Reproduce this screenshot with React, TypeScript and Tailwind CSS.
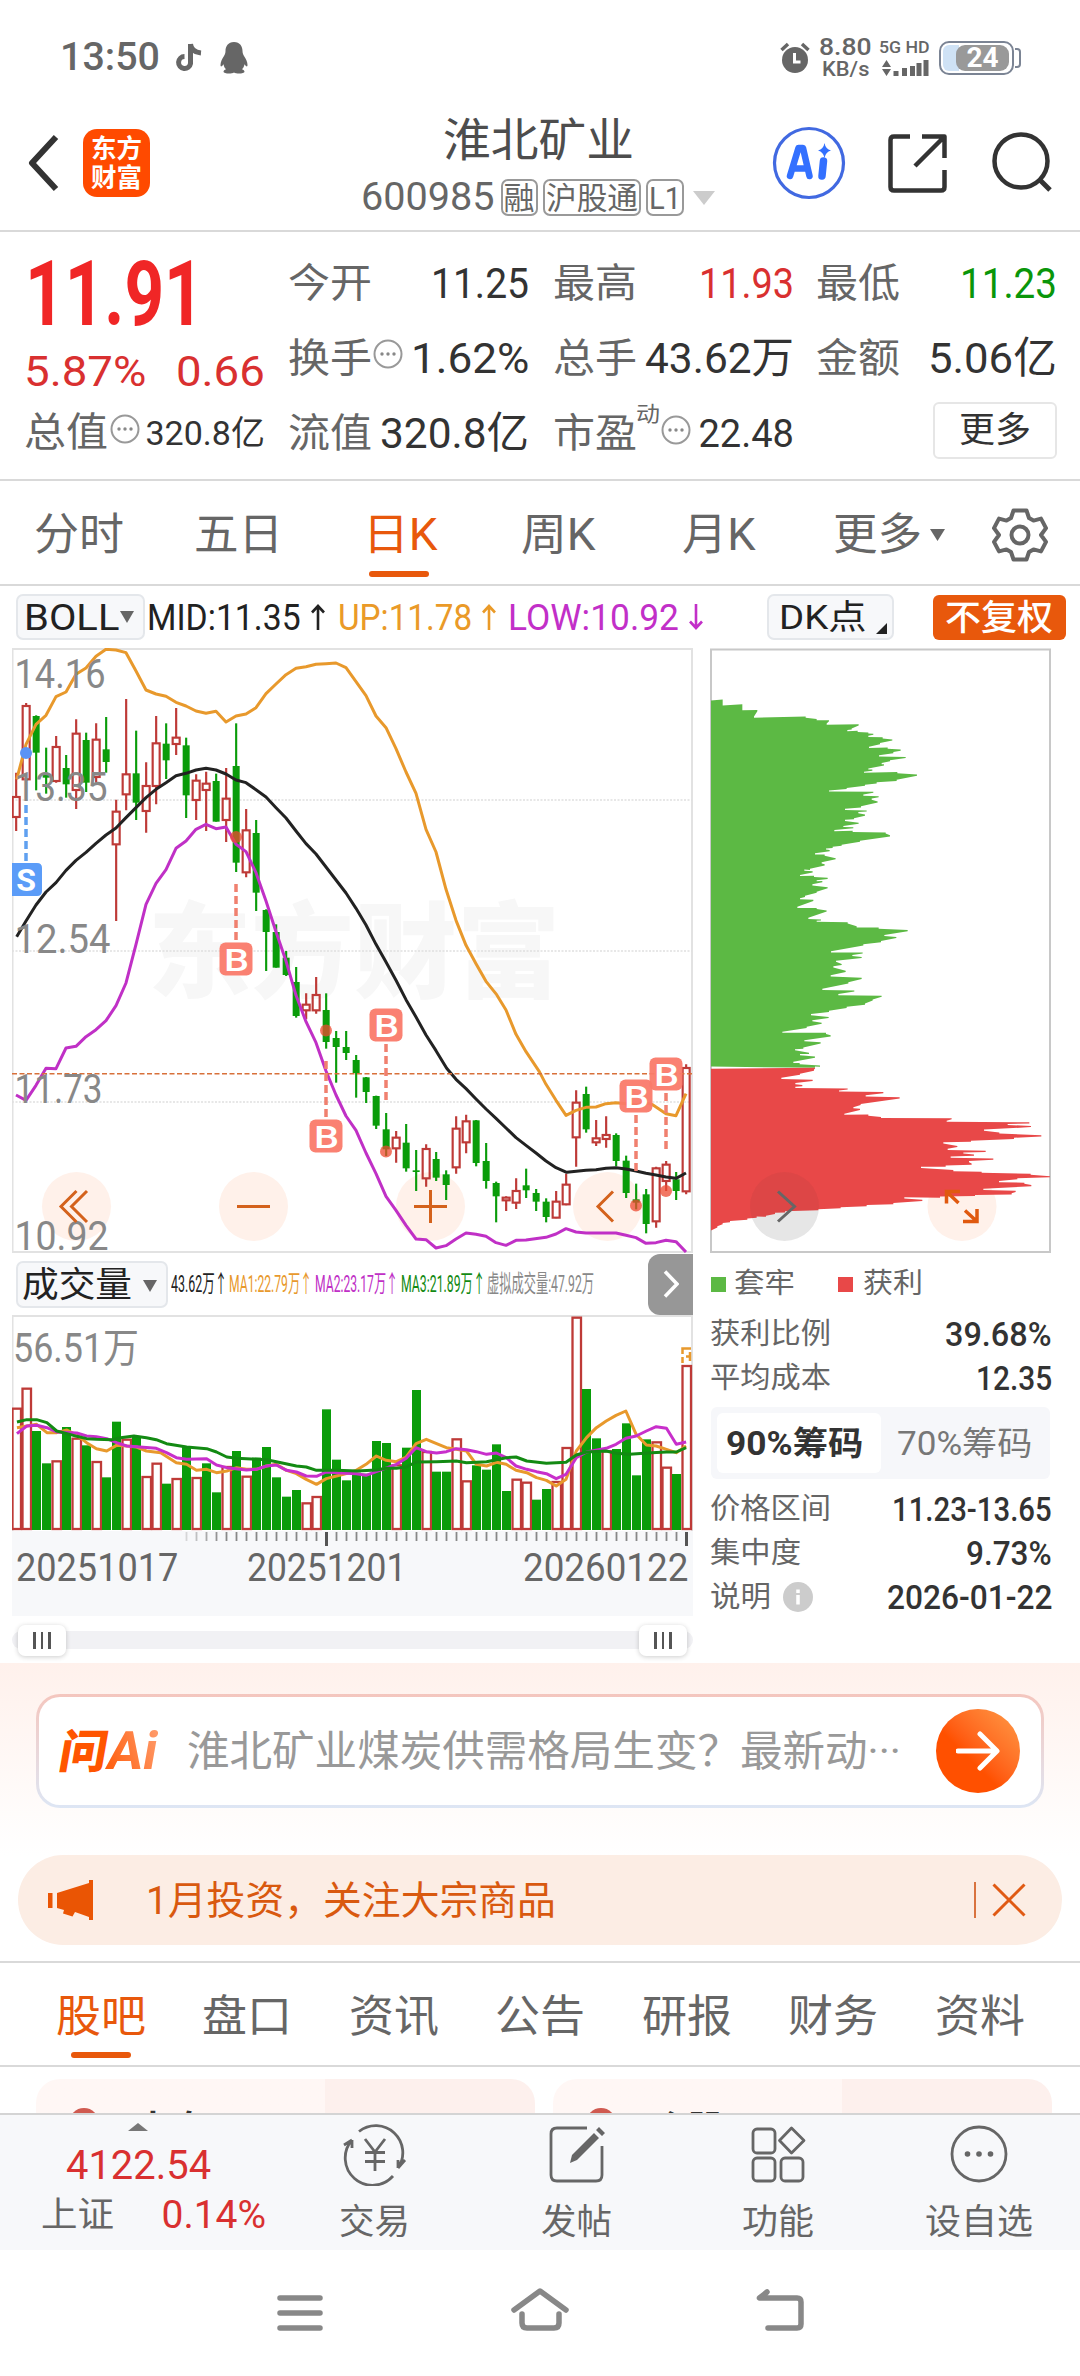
import { useLayoutEffect, useRef, useState, type ReactNode } from "react";

const FONT = "font-['Roboto','Noto_Sans_CJK_SC',sans-serif]";

/** One line of text condensed or widened to an exact pixel width. */
function Fit({ w, className = "", children }: { w: number; className?: string; children: ReactNode }) {
  const ref = useRef<HTMLSpanElement>(null);
  const [scale, setScale] = useState(1);
  useLayoutEffect(() => {
    if (ref.current) setScale((w + 4) / ref.current.offsetWidth);
  }, [w]);
  return (
    <span className={`inline-block shrink-0 whitespace-nowrap leading-none ${className}`} style={{ width: w }}>
      <span ref={ref} className="-ml-[2.5px] inline-block origin-left" style={{ transform: `scaleX(${scale})` }}>
        {children}
      </span>
    </span>
  );
}

function Draw({ box, className, children }: { box: string; className: string; children: ReactNode }) {
  return (
    <svg viewBox={box} className={`shrink-0 ${className}`} fill="none">
      {children}
    </svg>
  );
}

function Dots({ className = "" }: { className?: string }) {
  return (
    <Draw box="0 0 30 30" className={`h-[30px] w-[30px] ${className}`}>
      <circle cx="15" cy="15" r="13.5" stroke="#999" strokeWidth="2" />
      <circle cx="9" cy="15" r="1.7" fill="#888" />
      <circle cx="15" cy="15" r="1.7" fill="#888" />
      <circle cx="21" cy="15" r="1.7" fill="#888" />
    </Draw>
  );
}

function StatusBar() {
  return (
    <div className="flex h-[115px] items-center pl-[62px] text-[#666]">
      <Fit w={96} className="text-[39px] font-medium">13:50</Fit>
      <Draw box="0 0 28 30" className="ml-[17px] h-[30px] w-[28px]">
        <path d="M15.5 1V20.5A6 6 0 1 1 9.5 13.5" stroke="#666" strokeWidth="5" />
        <path d="M15.5 1c.5 6 4.500 8.500 10.500 9" stroke="#666" strokeWidth="5" />
      </Draw>
      <Draw box="0 0 28 32" className="ml-[17px] h-[32px] w-[28px]">
        <path
          d="M14 0C8 0 5.500 4.500 5.500 9c0 2-.5 3-1.500 5C2 17 .5 20 .5 23c0 2 1 2 3-.8.4 2.300 1.200 3.800 2.500 5-1.500.5-2.500 1.300-2.500 2.600 0 2 8 2.400 10.500.8 2.500 1.600 10.500 1.200 10.500-.8 0-1.300-1-2.100-2.500-2.600 1.300-1.200 2.100-2.700 2.500-5 2 2.800 3 2.800 3 .8 0-3-1.500-6-3.500-9-1-2-1.500-3-1.500-5C22.500 4.500 20 0 14 0Z"
          fill="#666"
        />
      </Draw>
      <Draw box="0 0 30 32" className="ml-[532px] h-[32px] w-[30px]">
        <circle cx="15" cy="18" r="13" fill="#666" />
        <path d="M1.500 8 8 2M28.500 8 22 2" stroke="#666" strokeWidth="3.500" />
        <path d="M14.500 11v9h6" stroke="#fff" strokeWidth="3" />
      </Draw>
      <div className="ml-[10px] flex w-[52px] flex-col items-center font-medium">
        <Fit w={49} className="text-[23px]">8.80</Fit>
        <Fit w={43} className="text-[20px]">KB/s</Fit>
      </div>
      <div className="ml-[9px] flex w-[48px] flex-col items-center gap-[3px] font-medium">
        <Fit w={47} className="text-[17px]">5G HD</Fit>
        <Draw box="0 0 48 18" className="h-[18px] w-[48px]">
          <path d="M1 8 5.500 1 10 8ZM1 10l4.500 7L10 10Z" fill="#666" />
          <path d="M15 17v-5M23.500 17V9M31.500 17V7M38 17V4M45 17V1" stroke="#666" strokeWidth="5" />
        </Draw>
      </div>
      <div className="relative ml-[10px] h-[34px] w-[75px] overflow-hidden rounded-[10px] border-[2px] border-[#7b8494] bg-white p-[2px]">
        <div className="h-full w-[16px] rounded-l-[6px] bg-[#cfe2f5]" />
        <div className="absolute top-[2px] left-[15px] flex h-[26px] w-[53px] items-center justify-center rounded-[9px] bg-[#999] text-[28px] leading-none font-bold text-white">
          24
        </div>
      </div>
      <div className="ml-[1px] h-[20px] w-[6px] rounded-r-[4px] border-[2px] border-l-0 border-[#7b8494]" />
    </div>
  );
}

function Tag({ w, children }: { w: number; children: ReactNode }) {
  return (
    <span className="flex h-[37px] items-center rounded-[7px] border-[2px] border-[#999] px-[3px] pt-[2px] text-[31px] text-[#666]">
      <Fit w={w}>{children}</Fit>
    </span>
  );
}

function Header() {
  return (
    <header className="grid h-[117px] grid-cols-[363px_352px_1fr] border-b-[2px] border-[#d9d9d9]">
      <div className="flex items-start pt-[14px] pl-[27px]">
        <Draw box="0 0 34 60" className="mt-[4px] h-[60px] w-[34px]">
          <path d="M29 4 5 30 29 56" stroke="#333" strokeWidth="6" strokeLinejoin="round" />
        </Draw>
        <div className="ml-[22px] flex h-[68px] w-[67px] flex-col items-center justify-center gap-[3px] rounded-[14px] bg-[#ff4a00] text-[26px] font-bold text-white">
          <Fit w={47}>东方</Fit>
          <Fit w={47}>财富</Fit>
        </div>
      </div>
      <div className="flex flex-col items-center">
        <Fit w={187} className="mt-[2px] text-[46px] text-[#4d4d4d]">淮北矿业</Fit>
        <div className="mt-[15px] flex items-center">
          <Fit w={130} className="text-[39px] text-[#666]">600985</Fit>
          <span className="ml-[8px] flex gap-[5px]">
            <Tag w={27}>融</Tag>
            <Tag w={88}>沪股通</Tag>
            <Tag w={28}>L1</Tag>
          </span>
          <Draw box="0 0 22 14" className="ml-[9px] h-[14px] w-[22px]">
            <path d="M0 0H22L11 14Z" fill="#ccc" />
          </Draw>
        </div>
      </div>
      <div className="flex items-start pt-[11px] pl-[57px]">
        <Draw box="0 0 74 74" className="h-[74px] w-[74px]">
          <circle cx="37" cy="37" r="34.500" stroke="#4169e1" strokeWidth="3.200" />
          <path d="M18 50 26.500 22H31L37.500 50M20.500 42.500H35" stroke="#3370ff" strokeWidth="6.500" strokeLinejoin="round" strokeLinecap="round" />
          <path d="M51.500 35 50 50" stroke="#3370ff" strokeWidth="7.500" strokeLinecap="round" />
          <path d="M52.500 17Q53.500 23 59 24.500 53.500 26 52.500 32 51.500 26 46 24.500 51.500 23 52.500 17Z" fill="#3370ff" />
        </Draw>
        <Draw box="0 0 64 64" className="ml-[40px] mt-[5px] h-[64px] w-[64px]">
          <path d="M24 5.500H8Q4.500 5.500 4.500 9V56Q4.500 59.500 8 59.500H55Q58.500 59.500 58.500 56V39" stroke="#333" strokeWidth="4.500" />
          <path d="M36 5.500H58.500V27M57.500 6.500 29 35" stroke="#333" strokeWidth="4.500" strokeLinejoin="round" />
        </Draw>
        <Draw box="0 0 64 64" className="ml-[40px] mt-[4px] h-[64px] w-[64px]">
          <circle cx="31" cy="31" r="26.500" stroke="#333" strokeWidth="4.500" />
          <path d="M49 49 60 60" stroke="#333" strokeWidth="5" />
        </Draw>
      </div>
    </header>
  );
}

function Stat({ label, children }: { label: string; children?: ReactNode }) {
  return (
    <div className="flex h-[75px] w-[237px] items-center">
      <Fit w={80} className="text-[40px] text-[#666]">{label}</Fit>
      {children}
    </div>
  );
}

function Quote() {
  const num = "ml-auto text-[43px] text-[#333]";
  return (
    <section className="flex h-[249px] border-b-[2px] border-[#d9d9d9] pl-[26px]">
      <div className="flex w-[264px] flex-col pt-[6px] text-[#d93030]">
        <div className="flex h-[113px] items-center">
          <Fit w={175} className="ml-[1px] text-[90px] font-bold text-[#f02626]">11.91</Fit>
        </div>
        <div className="flex h-[40px] items-center text-[43px]">
          <Fit w={118}>5.87%</Fit>
          <Fit w={85} className="ml-[34px]">0.66</Fit>
        </div>
        <div className="flex h-[84px] items-center">
          <Fit w={80} className="text-[40px] text-[#666]">总值</Fit>
          <Dots className="mb-[8px] ml-[4px]" />
          <Fit w={115} className="ml-[8px] text-[34px] text-[#333]">320.8亿</Fit>
        </div>
      </div>
      <div className="grid w-[766px] grid-cols-[265px_263px_1fr] content-start pt-[14px]">
        <Stat label="今开"><Fit w={94} className={num}>11.25</Fit></Stat>
        <Stat label="最高"><Fit w={91} className="ml-auto text-[43px] text-[#d93030]">11.93</Fit></Stat>
        <Stat label="最低"><Fit w={93} className="ml-auto text-[43px] text-[#0a960a]">11.23</Fit></Stat>
        <Stat label="换手"><Dots className="mb-[10px] ml-[3px]" /><Fit w={114} className={num}>1.62%</Fit></Stat>
        <Stat label="总手"><Fit w={145} className={num}>43.62万</Fit></Stat>
        <Stat label="金额"><Fit w={125} className={num}>5.06亿</Fit></Stat>
        <Stat label="流值"><Fit w={145} className={num}>320.8亿</Fit></Stat>
        <Stat label="市盈">
          <Fit w={20} className="mb-[38px] ml-[3px] text-[21px] text-[#666]">动</Fit>
          <Dots className="mb-[8px] ml-[3px]" />
          <Fit w={91} className="ml-auto text-[38px] text-[#333]">22.48</Fit>
        </Stat>
        <div className="ml-[115px] mt-[6px] flex h-[57px] w-[124px] items-center justify-center rounded-[6px] border-[2px] border-[#e6e6e6] bg-white">
          <Fit w={68} className="text-[35px] text-[#333]">更多</Fit>
        </div>
      </div>
    </section>
  );
}

function PeriodTabs() {
  return (
    <nav className="flex h-[105px] items-center border-b-[2px] border-[#d9d9d9] pl-[36px] pt-[4px] text-[44px] text-[#666]">
      <Fit w={86}>分时</Fit>
      <Fit w={85} className="ml-[74px]">五日</Fit>
      <span className="relative ml-[84px] flex text-[#e8580c]">
        <Fit w={71}>日K</Fit>
        <span className="absolute top-[58px] left-[4px] h-[6px] w-[60px] rounded-full bg-[#e8580c]" />
      </span>
      <Fit w={71} className="ml-[87px]">周K</Fit>
      <Fit w={70} className="ml-[90px]">月K</Fit>
      <Fit w={85} className="ml-[81px]">更多</Fit>
      <Draw box="0 0 15 12" className="ml-[10px] h-[12px] w-[15px]">
        <path d="M0 0H15L7.500 12Z" fill="#666" />
      </Draw>
      <Draw box="0 0 56 56" className="ml-[47px] h-[56px] w-[56px]">
        <path
          d="M21.500 3.500h13l2.500 7.500 4.500 2.600 7.500-2 5 9.500-5 6.900 5 6.900-5 9.500-7.500-2-4.500 2.600-2.500 7.500h-13L19 45l-4.500-2.600-7.500 2-5-9.500 5-6.900-5-6.900 5-9.500 7.500 2 4.500-2.600Z"
          stroke="#666"
          strokeWidth="4"
          strokeLinejoin="round"
        />
        <circle cx="28" cy="28" r="8.500" stroke="#666" strokeWidth="4" />
      </Draw>
    </nav>
  );
}

function Down({ className = "" }: { className?: string }) {
  return (
    <Draw box="0 0 14 12" className={`h-[12px] w-[14px] ${className}`}>
      <path d="M0 0H14L7 12Z" fill="#666" />
    </Draw>
  );
}

function Arrow({ color, down = false }: { color: string; down?: boolean }) {
  return (
    <Draw box="0 0 16 26" className={`ml-[11px] h-[26px] w-[16px] ${down ? "rotate-180" : ""}`}>
      <path d="M8 26V2M2 8.500 8 2l6 6.500" stroke={color} strokeWidth="2.600" />
    </Draw>
  );
}

function IndicatorRow() {
  return (
    <div className="flex h-[62px] items-center pl-[16px] text-[37px]">
      <div className="flex h-[46px] w-[129px] items-center rounded-[7px] border-[2px] border-[#e4e7eb] bg-[#f7f8fa] pl-[8px] text-[#222]">
        <Fit w={91}>BOLL</Fit>
        <Down className="ml-[3px]" />
      </div>
      <Fit w={150} className="ml-[4px] text-[#222]">MID:11.35</Fit>
      <Arrow color="#222" />
      <Fit w={130} className="ml-[14px] text-[#ea9a28]">UP:11.78</Fit>
      <Arrow color="#ea9a28" />
      <Fit w={167} className="ml-[13px] text-[#c22fc8]">LOW:10.92</Fit>
      <Arrow color="#c22fc8" down />
      <div className="relative ml-[63px] flex h-[46px] w-[127px] items-center rounded-[7px] border-[2px] border-[#e4e7eb] bg-[#f7f8fa] pl-[12px] text-[34px] text-[#222]">
        <Fit w={84}>DK点</Fit>
        <Draw box="0 0 11 11" className="absolute right-[5px] bottom-[4px] h-[11px] w-[11px]">
          <path d="M11 0V11H0Z" fill="#222" />
        </Draw>
      </div>
      <div className="ml-[39px] flex h-[45px] w-[133px] items-center justify-center rounded-[6px] bg-[#e8580c] pt-[2px] text-[35px] font-medium text-white">
        <Fit w={104}>不复权</Fit>
      </div>
    </div>
  );
}

type Bar = [up: 0 | 1, high: number, low: number, top: number, bottom: number];

/* Daily candles, y in thirds of a pixel. */
const CANDLES: Bar[] = [
  [1, 575, 750, 648, 708], [1, 366, 600, 375, 595], [0, 403, 628, 405, 515], [0, 500, 638, 580, 590],
  [1, 465, 605, 498, 600], [0, 522, 650, 561, 610], [1, 415, 684, 458, 627], [0, 455, 633, 477, 605],
  [1, 427, 608, 476, 588], [0, 408, 575, 505, 543], [1, 656, 1020, 692, 790], [1, 354, 688, 580, 640],
  [0, 449, 717, 577, 665], [1, 544, 755, 615, 690], [1, 405, 670, 487, 615], [0, 427, 594, 488, 538],
  [1, 381, 522, 470, 489], [0, 470, 711, 493, 643], [1, 580, 717, 599, 657], [1, 572, 750, 608, 627],
  [0, 578, 722, 600, 722], [1, 561, 783, 653, 717], [0, 427, 873, 555, 845], [1, 684, 889, 748, 874],
  [0, 717, 990, 756, 935], [0, 985, 1170, 987, 1053], [0, 1030, 1160, 1053, 1160], [0, 1110, 1185, 1130, 1182],
  [0, 1158, 1310, 1203, 1305], [1, 1237, 1315, 1271, 1288], [1, 1188, 1298, 1242, 1288], [0, 1237, 1403, 1287, 1383],
  [0, 1350, 1505, 1371, 1398], [0, 1350, 1437, 1398, 1416], [0, 1422, 1550, 1437, 1476], [0, 1488, 1566, 1489, 1533],
  [0, 1544, 1644, 1545, 1634], [0, 1596, 1725, 1645, 1705], [1, 1650, 1745, 1670, 1702], [0, 1629, 1772, 1685, 1762],
  [0, 1707, 1830, 1768, 1773], [1, 1690, 1817, 1704, 1792], [0, 1713, 1800, 1734, 1790], [0, 1768, 1857, 1780, 1812],
  [1, 1606, 1778, 1643, 1759], [1, 1601, 1717, 1621, 1684], [0, 1617, 1756, 1618, 1746], [0, 1686, 1823, 1740, 1800],
  [0, 1802, 1924, 1806, 1846], [1, 1846, 1890, 1850, 1858], [1, 1792, 1884, 1830, 1865], [0, 1763, 1851, 1813, 1828],
  [0, 1824, 1890, 1836, 1862], [0, 1852, 1924, 1862, 1908], [1, 1830, 1912, 1862, 1910], [1, 1778, 1873, 1811, 1870],
  [1, 1528, 1757, 1565, 1669], [0, 1517, 1655, 1539, 1645], [1, 1617, 1695, 1672, 1684], [1, 1606, 1700, 1662, 1674],
  [0, 1657, 1756, 1662, 1740], [0, 1724, 1851, 1739, 1836], [0, 1808, 1885, 1855, 1865], [0, 1824, 1957, 1840, 1929],
  [1, 1757, 1940, 1762, 1921], [1, 1740, 1830, 1751, 1800], [0, 1773, 1857, 1795, 1830], [1, 1450, 1840, 1461, 1831],
];

const shift = (dx: number, dy: number, pts: string) =>
  pts.split(" ").map((p) => {
    const [x, y] = p.split(",").map(Number);
    return `${x + dx},${y + dy}`;
  }).join(" ");

const UPPER = [
  "50,595 78,490 108,430 138,403 168,347 198,333 228,280 258,261 288,226 318,205 348,207 378,215 408,270 438,327 468,339 498,346 528,364 558,375 588,390 618,397 648,391 678,423 708,405 738,399 768,380 798,338 828,309 858,281 888,262 918,257 948,250 978,248 1008,246 1038,260",
  shift(1020, 0, "78,344 108,405 138,440 168,503 198,573 228,637 258,745 288,813 318,925"),
  shift(1020, 960, "348,58 378,133 408,188 438,241 470,281 498,327 528,400 558,452 598,512 618,550 648,598 678,643 708,628 738,619 768,618 798,608 828,605 858,608 888,612 918,606 938,611 978,638 1008,644 1038,578"),
].join(" ");
const MID = [
  "50,1067 78,1020 108,972 138,933 168,905 198,868 228,838 258,814 288,787 318,762 348,741 378,710 408,680 438,650 468,625 498,605 528,584 558,577 588,567 618,562 648,567 678,579 708,597 738,605 768,626 798,648 828,680 858,711 888,750 918,788 948,819 978,858 1008,897 1038,936",
  shift(1020, 960, "48,22 78,72 108,130 138,183 168,238 198,296 228,348 258,402 288,449 320,502 348,535 378,563 408,594 438,624 468,652 498,681 528,710 558,733 588,756 618,780 648,800 680,814 738,808 768,806 798,802 828,800 858,804 888,810 918,817 948,822 978,828 1008,832 1038,816"),
].join(" ");
const LOWER = [
  shift(0, 960, "48,582 78,598 108,553 138,502 168,503 198,441 228,436 258,407 288,386 318,359 348,314 378,246 408,130"),
  "438,970 468,907 498,866 528,802 558,780 588,745 618,730 648,743 678,738 708,790 738,812 768,875 798,960",
  shift(0, 960, "828,92 858,180 888,283 918,362 948,425 978,510 1008,582 1038,645"),
  shift(1020, 960, "48,688 78,756 108,818 138,886 168,928 198,973 228,1014 258,1016 288,1041 318,1034 348,1014 378,996 408,1000 438,1006 468,1025 498,1033 528,1018 558,1017 618,1009 648,999 678,983 708,993 738,996 828,996 858,1003 888,1010 918,1027 948,1025 978,1018 1008,1022 1038,1053"),
].join(" ");

const BUYS = [
  { x: 236, box: 958, dot: 836, from: 883, to: 941 },
  { x: 326, box: 1135, dot: 1029.5, from: 1060, to: 1118 },
  { x: 386, box: 1024, dot: 1150.5, from: 1043, to: 1100 },
  { x: 636, box: 1095, dot: 1204.5, from: 1114, to: 1170 },
  { x: 666, box: 1073, dot: 1190, from: 1092, to: 1149 },
];

const LEVELS: [string, number, number][] = [
  ["14.16", 687, 88], ["13.35", 800, 90], ["12.54", 952, 93], ["11.73", 1102, 85], ["10.92", 1249, 91],
];

function PriceChart() {
  return (
    <svg viewBox="12 647 681 605" className={`h-[605px] w-[681px] ${FONT}`} fill="none">
      <rect x="12.500" y="648" width="679.500" height="603" stroke="#e2e2e2" strokeWidth="2" />
      <text x="148" y="989" fontSize="104" fontWeight="900" fill="#f7f7f7" textLength="412" lengthAdjust="spacingAndGlyphs">东方财富</text>
      {[799, 950, 1101].map((y) => (
        <path key={y} d={`M12 ${y}H692`} stroke="#e0e0e0" strokeWidth="1.500" strokeDasharray="2 1.500" />
      ))}
      {[76.5, 253.5, 430.5, 607.5].map((x) => (
        <circle key={x} cx={x} cy="1205.500" r="34.500" fill="#fff1ea" />
      ))}
      <g transform="translate(0 580) scale(.33333)">
        {CANDLES.map(([up, hi, lo, top, bottom], i) => {
          const x = 48.5 + i * 30;
          return up ? (
            <g key={i} stroke="#be3a37" strokeWidth="6.500">
              <path d={`M${x} ${hi}V${top}M${x} ${bottom}V${lo}`} />
              <rect x={x - 10.5} y={top} width="21" height={bottom - top} />
            </g>
          ) : (
            <g key={i} fill="#0a9c0a">
              <rect x={x - 3.2} y={hi} width="6.400" height={lo - hi} />
              <rect x={x - 10.5} y={top} width="21" height={bottom - top} />
            </g>
          );
        })}
        <g strokeWidth="9" strokeLinejoin="round">
          <polyline points={UPPER} stroke="#e8992c" />
          <polyline points={MID} stroke="#222" />
          <polyline points={LOWER} stroke="#c030c6" />
        </g>
      </g>
      <path d="M12 1072.700H692" stroke="#d8703a" strokeWidth="1.500" strokeDasharray="5 2.500" />
      {LEVELS.map(([t, y, w]) => (
        <text key={t} x="14.500" y={y} fontSize="40" fill="#888" textLength={w + 3} lengthAdjust="spacingAndGlyphs">{t}</text>
      ))}
      <circle cx="26" cy="752" r="6" fill="#5b93f5" />
      <path d="M26 804V862" stroke="#5fa0f0" strokeWidth="3.500" strokeDasharray="8 4" />
      <path d="M12 862H37Q42 862 42 867V890Q42 895 37 895H12Z" fill="#5b9cf8" />
      <text x="26" y="890" fontSize="32" fontWeight="700" fill="#fff" textAnchor="middle">S</text>
      {BUYS.map((b) => (
        <g key={b.x}>
          <path d={`M${b.x} ${b.from}V${b.to}`} stroke="#f0806f" strokeWidth="3.500" strokeDasharray="8 4" />
          <circle cx={b.x} cy={b.dot} r="6" fill="#ee4a30" fillOpacity=".75" />
          <rect x={b.x - 16.5} y={b.box - 16.5} width="33" height="33" rx="6" fill="#fa7a6a" fillOpacity=".95" />
          <text x={b.x - 12} y={b.box + 11.5} fontSize="32" fontWeight="500" fill="#fff" textLength="25" lengthAdjust="spacingAndGlyphs">B</text>
        </g>
      ))}
      <g stroke="#d4621c" strokeWidth="3">
        <path d="M76.500 1190 61 1205.500 76.500 1221M87 1190 71.500 1205.500 87 1221M237 1205.500H270M414 1205.500H447M430.500 1189V1222M613 1190.500 598 1205.500 613 1220.500" />
      </g>
    </svg>
  );
}

/* Gives every price step a flat end. */
const steps = (pts: string) =>
  pts.split(" ").map((p) => {
    const [x, y] = p.split(",").map(Number);
    return `${x},${y - 1.4} ${x},${y + 1.4}`;
  }).join(" ");

const TRAPPED = steps(
  "63,169 98,169 98,181 157,181 157,193 202,195 192,211 347,211 380,217 417,220 410,228 506,230 485,240 472,244 503,246 535,250 550,253 535,258 578,262 607,267 570,276 537,285 593,287 632,292 610,298 567,306 647,310 600,318 575,325 582,328 535,338 547,341 522,346 622,347 681,353 620,366 560,372 525,378 470,386 417,392 550,395 520,402 566,406 545,412 563,419 513,431 465,437 530,441 505,445 525,451 492,460 465,464 506,471 460,479 490,482 433,489 488,491 587,495 600,502 510,515 455,525 428,530 408,534 419,538 375,546 404,549 437,558 395,568 404,573 360,584 343,586 368,590 330,599 372,601 413,606 380,612 397,614 367,622 413,629 380,640 345,650 330,656 370,660 322,677 380,680 410,686 355,704 393,708 380,711 473,715 500,725 566,728 653,734 583,746 619,751 573,761 520,769 423,786 518,789 487,795 515,800 438,809 455,817 430,823 467,834 422,845 515,851 475,862 397,878 493,882 445,891 575,895 548,904 525,914 470,922 417,932 363,940 416,947 367,955 395,961 350,971 277,983 408,986 422,992 343,1004 392,1009 340,1022 315,1026 357,1035 330,1038 375,1044 310,1057 329,1060 390,1066 375,1068.6 63,1068.6",
);
const PROFIT = steps(
  "63,1071.4 375,1071.4 372,1076 330,1086 274,1096 368,1101 316,1109 337,1114 316,1118 473,1122 447,1127 580,1131 527,1139 629,1144 512,1160 490,1168 510,1172 463,1184 535,1186 573,1192 785,1195 770,1201 1018,1205 953,1209 1023,1214 882,1223 928,1230 1054,1237 972,1243 843,1250 760,1254 802,1263 773,1270 887,1275 820,1279 852,1284 782,1289 910,1294 837,1300 845,1306 767,1311 693,1314 790,1322 875,1326 1022,1331 1080,1337 982,1342 927,1349 1003,1353 1024,1359 880,1368 977,1373 965,1379 855,1383 750,1387 643,1389 697,1395 610,1403 530,1408 452,1413 385,1418 285,1423 255,1427 228,1434 200,1436 172,1441 120,1447 98,1452 82,1460 63,1470",
);

function ChipChart() {
  return (
    <svg viewBox="710 647 342 605" className="h-[605px] w-[342px]" fill="none">
      <rect x="711" y="648.500" width="339" height="602.500" stroke="#c8c8c8" strokeWidth="2" />
      <circle cx="962" cy="1205.500" r="34.500" fill="#fff1ea" />
      <circle cx="784.500" cy="1205.500" r="34.500" fill="#f2f2f2" />
      <g transform="translate(690 630) scale(.33333 .40816)">
        <polygon points={TRAPPED} fill="#5cb944" />
        <polygon points={PROFIT} fill="#e84848" />
      </g>
      <circle cx="784.500" cy="1205.500" r="34.500" fill="#333" fillOpacity=".06" />
      <path d="M778 1190.500 794.500 1205.500 778 1220.500" stroke="#666" strokeWidth="3" />
      <path d="M958.500 1202 946.500 1190.500M946.500 1202.500V1190.500H960M965 1209.500 977 1220.500M977 1208V1220.500H963" stroke="#e0590f" strokeWidth="3.500" />
    </svg>
  );
}

/* Volume bars: negative numbers are falling days, the size is the bar's top in thirds of a pixel. */
const VOLUMES = [
  470, 410, -540, -637, 628, -528, 560, -583, 630, -679, -512, 563, -558, 675, 635, -698, 681, -588, 678, -637,
  -724, 645, -600, 674, -620, -588, -679, -737, -717, 754, 735, -475, -626, -688, -665, -668, -570, -576, 640, -590,
  -417, 600, -662, -662, 562, 688, -643, -656, -580, -720, 683, 692, -746, -714, 690, 588, 197, -414, -562, 598,
  -594, -517, -673, -565, 571, 647, -669, 342,
];
const MA1 =
  "38,530 82,520 105,545 127,545 150,537 172,552 194,575 216,593 239,600 261,583 284,585 306,588 328,600 360,605 395,635 418,640 440,658 463,655 485,665 508,660 530,650 552,655 574,655 597,645 619,640 642,658 664,668 686,685 709,700 731,683 754,675 776,668 798,658 820,640 843,615 865,628 888,632 910,618 932,578 955,565 978,578 1000,590 1022,595 1045,600 1067,640 1090,645 1112,634 1134,640 1156,658 1180,665 1202,680 1224,688 1246,705 1268,685 1291,600 1314,560 1336,530 1358,510 1380,493 1402,480 1425,550 1448,582 1470,585 1493,595 1515,605 1537,585";
const MA2 =
  "38,548 60,525 82,523 105,530 127,543 172,546 194,555 216,557 239,563 261,575 284,585 306,587 350,592 373,605 395,620 418,625 463,623 485,642 508,650 552,657 574,655 597,645 619,642 642,658 664,663 686,675 709,676 731,663 754,665 798,668 820,673 843,662 888,640 910,622 932,590 955,602 978,606 1000,602 1022,593 1045,596 1067,602 1090,610 1112,606 1134,620 1156,645 1180,655 1202,662 1224,668 1246,683 1268,670 1291,620 1314,603 1358,592 1380,580 1402,562 1425,555 1448,540 1470,527 1493,532 1515,580 1537,573";
const MA3 =
  "38,513 60,506 82,506 105,515 127,540 150,548 172,556 194,563 216,565 250,566 270,560 300,555 328,560 350,566 373,578 418,588 463,593 485,603 508,618 530,622 597,626 619,632 664,645 686,648 709,658 754,658 800,660 843,657 865,652 888,652 910,648 932,633 978,632 1022,630 1045,635 1090,632 1134,620 1156,618 1180,630 1224,637 1268,634 1291,612 1314,603 1358,600 1380,607 1410,610 1460,605 1493,603 1515,603 1537,590";

function VolumeChart() {
  return (
    <svg viewBox="12 1314 681 216" className={`h-[216px] w-[681px] ${FONT}`} fill="none">
      <path d="M12.500 1530V1315H692V1530" stroke="#e2e2e2" strokeWidth="2" />
      {VOLUMES.map((v, i) => {
        const x = 16.5 + i * 10;
        const y = 1250 + Math.abs(v) / 3;
        return v < 0 ? (
          <rect key={i} x={x - 4.5} y={y} width="9" height={1529 - y} fill="#0a9c0a" />
        ) : (
          <rect key={i} x={x - 4} y={y + 1} width="8.500" height={1527 - y} stroke="#be3a37" strokeWidth="2.300" fill="#fff" />
        );
      })}
      <path d="M682.500 1353V1347.500H691M682.500 1356V1362M686 1355.500H689M690 1351V1360" stroke="#e8992c" strokeWidth="2.500" />
      <g transform="translate(0 1250) scale(.4464 .33333)" strokeLinejoin="round" strokeWidth="3">
        <polyline points={MA1} stroke="#e8992c" vectorEffect="non-scaling-stroke" />
        <polyline points={MA2} stroke="#c82fcb" vectorEffect="non-scaling-stroke" />
        <polyline points={MA3} stroke="#138a13" vectorEffect="non-scaling-stroke" />
      </g>
      <text x="13" y="1361" fontSize="40" fill="#888" textLength="126" lengthAdjust="spacingAndGlyphs">56.51万</text>
    </svg>
  );
}

function TimeAxis() {
  return (
    <div className="flex h-[85px] w-[681px] flex-col bg-[#f7f8fa] text-[39px] text-[#666]">
      <Draw box="12 1530 681 15" className="h-[15px] w-[681px]">
        {Array.from({ length: 51 }, (_, i) => {
          const x = 186.5 + i * 10;
          const major = i === 14 || i === 50;
          return (
            <path
              key={i}
              d={`M${x} 1531V${major ? 1545 : 1540}`}
              stroke={major ? "#555" : "#888"}
              strokeWidth={major ? 3 : 1.8}
              strokeOpacity={Math.min(1, 0.3 + i * 0.2)}
            />
          );
        })}
      </Draw>
      <div className="flex pt-[3px] pl-[6px]">
        <Fit w={158}>20251017</Fit>
        <Fit w={155} className="ml-[73px]">20251201</Fit>
        <Fit w={161} className="ml-[121px]">20260122</Fit>
      </div>
    </div>
  );
}

function Thumb() {
  return (
    <span className="flex h-[31px] w-[48px] items-center justify-center gap-[5px] rounded-[7px] bg-white shadow-[0_1px_5px_rgba(0,0,0,0.2)]">
      <i className="h-[17px] w-[2.5px] bg-[#555]" />
      <i className="h-[17px] w-[2.5px] bg-[#555]" />
      <i className="h-[17px] w-[2.5px] bg-[#555]" />
    </span>
  );
}

function MaLabel({ w, color, gap, children }: { w: number; color: string; gap: string; children: ReactNode }) {
  return <Fit w={w} className={`${gap} ${color} text-[24px]`}>{children}</Fit>;
}

function VolumeHeader() {
  return (
    <div className="flex h-[62px] w-[681px] items-center pl-[4px]">
      <div className="mt-[1px] flex h-[47px] w-[152px] items-center rounded-[7px] border-[2px] border-[#e4e7eb] bg-[#f7f8fa] pl-[6px] pt-[2px] text-[35px] text-[#222]">
        <Fit w={106}>成交量</Fit>
        <Down className="ml-[13px]" />
      </div>
      <MaLabel w={52} gap="ml-[5px]" color="text-[#222]">43.62万↑</MaLabel>
      <MaLabel w={79} gap="ml-[6px]" color="text-[#e8992c]">MA1:22.79万↑</MaLabel>
      <MaLabel w={79} gap="ml-[7px]" color="text-[#c030c6]">MA2:23.17万↑</MaLabel>
      <MaLabel w={80} gap="ml-[7px]" color="text-[#138a13]">MA3:21.89万↑</MaLabel>
      <MaLabel w={103} gap="ml-[6px]" color="text-[#888]">虚拟成交量:47.92万</MaLabel>
      <span className="ml-auto flex h-[61px] w-[45px] items-center justify-center rounded-l-[12px] bg-[#979797]">
        <Draw box="0 0 16 28" className="h-[28px] w-[16px]">
          <path d="M2 1.500 14 14 2 26.500" stroke="#fff" strokeWidth="3.500" />
        </Draw>
      </span>
    </div>
  );
}

function Fact({ label, w, value, vw, info = false }: { label: string; w: number; value: string; vw: number; info?: boolean }) {
  return (
    <div className="flex h-[44px] items-center">
      <Fit w={w} className="ml-[1px] text-[29px] text-[#666]">{label}</Fit>
      {info && (
        <Draw box="0 0 30 30" className="ml-[14px] h-[30px] w-[30px]">
          <circle cx="15" cy="15" r="15" fill="#ccc" />
          <path d="M15 13V22.500M15 7.500V11" stroke="#fff" strokeWidth="3.500" />
        </Draw>
      )}
      <Fit w={vw} className="ml-auto text-[33px] font-medium text-[#333]">{value}</Fit>
    </div>
  );
}

function ChipPanel() {
  return (
    <div className="flex w-[339px] flex-col">
      <div className="flex h-[62px] items-center text-[28px] text-[#666]">
        <span className="h-[15px] w-[15px] bg-[#5cb944]" />
        <Fit w={57} className="ml-[10px]">套牢</Fit>
        <span className="ml-[45px] h-[15px] w-[15px] bg-[#e84848]" />
        <Fit w={56} className="ml-[12px]">获利</Fit>
      </div>
      <div className="-mt-[3px]">
        <Fact label="获利比例" w={117} value="39.68%" vw={103} />
        <Fact label="平均成本" w={117} value="12.35" vw={72} />
      </div>
      <div className="mt-[7px] flex h-[72px] rounded-[6px] bg-[#f6f7fa] p-[6px] text-[33px]">
        <div className="flex w-[164px] items-center rounded-[6px] bg-white pl-[11px] font-bold text-[#333]">
          <Fit w={133}>90%筹码</Fit>
        </div>
        <div className="flex items-center pl-[18px] text-[#777]">
          <Fit w={131}>70%筹码</Fit>
        </div>
      </div>
      <div className="mt-[8px]">
        <Fact label="价格区间" w={117} value="11.23-13.65" vw={156} />
        <Fact label="集中度" w={87} value="9.73%" vw={82} />
        <Fact label="说明" w={57} value="2026-01-22" vw={161} info />
      </div>
    </div>
  );
}

function Charts() {
  return (
    <section className="flex h-[1015px] gap-[17px] pl-[12px]">
      <div className="flex w-[681px] flex-col">
        <PriceChart />
        <VolumeHeader />
        <VolumeChart />
        <TimeAxis />
        <div className="mt-[15px] flex h-[18px] items-center justify-between rounded-full bg-[#f1f1f4] px-[6px]">
          <Thumb />
          <Thumb />
        </div>
      </div>
      <div className="flex flex-col">
        <ChipChart />
        <div className="pl-[1px]">
          <ChipPanel />
        </div>
      </div>
    </section>
  );
}

function AskLogo() {
  return (
    <svg viewBox="0 0 100 46" className={`ml-[20px] h-[46px] w-[100px] shrink-0 ${FONT}`} fill="none">
      <defs>
        <linearGradient id="ask" gradientUnits="userSpaceOnUse" x1="45" y1="40" x2="100" y2="10">
          <stop offset="0" stopColor="#ff5500" />
          <stop offset="1" stopColor="#ff9866" />
        </linearGradient>
      </defs>
      <g transform="skewX(-10)">
        <text x="5" y="39.500" fontSize="46" fontWeight="900" fill="#ff5500" textLength="48" lengthAdjust="spacingAndGlyphs">问</text>
        <text x="53" y="41" fontSize="53" fontWeight="700" fill="url(#ask)" textLength="50" lengthAdjust="spacingAndGlyphs">Ai</text>
      </g>
    </svg>
  );
}

function AskAi() {
  return (
    <section className="h-[192px] bg-gradient-to-b from-[#fff1ec] to-white px-[36px] pt-[31px]">
      <div className="h-[114px] rounded-[24px] bg-gradient-to-b from-[#f4c6be] to-[#dde6f4] p-[3px]">
        <div className="flex h-full items-center rounded-[21px] bg-white">
          <AskLogo />
          <Fit w={710} className="ml-[30px] mt-[2px] text-[42px] text-[#999]">淮北矿业煤炭供需格局生变？最新动···</Fit>
          <div className="ml-[37px] flex h-[84px] w-[84px] items-center justify-center rounded-full bg-gradient-to-tr from-[#ff5000] from-40% to-[#ff9a45]">
            <Draw box="0 0 44 40" className="h-[40px] w-[44px]">
              <path d="M2 20H40M24 3 41 20 24 37" stroke="#fff" strokeWidth="5" strokeLinecap="round" strokeLinejoin="round" />
            </Draw>
          </div>
        </div>
      </div>
    </section>
  );
}

function Notice() {
  return (
    <section className="h-[108px] border-b-[2px] border-[#d9d9d9] px-[18px]">
      <div className="flex h-[90px] items-center rounded-full bg-[#fcede4] pl-[30px]">
        <Draw box="0 0 45 40" className="h-[40px] w-[45px]">
          <path d="M0 13H4.500V28H0ZM9 13 41 3V0H45V40H41V37L27 32 24.500 36.500 15 33.500 16 30 9 28Z" fill="#ea5504" />
        </Draw>
        <Fit w={406} className="ml-[55px] mt-[2px] text-[39px] text-[#d9590f]">1月投资，关注大宗商品</Fit>
        <span className="ml-[420px] h-[36px] w-[1.5px] bg-[#d9733f]" />
        <Draw box="0 0 34 34" className="ml-[16px] h-[34px] w-[34px]">
          <path d="M1.500 1.500 32.500 32.500M32.500 1.500 1.500 32.500" stroke="#e05a14" strokeWidth="3" />
        </Draw>
      </div>
    </section>
  );
}

function InfoTabs() {
  return (
    <nav className="flex h-[104px] items-center gap-[60.5px] border-b-[2px] border-[#d9d9d9] pl-[58px] pt-[6px] text-[44px] text-[#666]">
      <span className="relative flex text-[#e8580c]">
        <Fit w={86}>股吧</Fit>
        <span className="absolute top-[57px] left-[13px] h-[6px] w-[60px] rounded-full bg-[#e8580c]" />
      </span>
      {["盘口", "资讯", "公告", "研报", "财务", "资料"].map((t) => (
        <Fit key={t} w={86}>{t}</Fit>
      ))}
    </nav>
  );
}

function PostCard({ children }: { children: ReactNode }) {
  return (
    <div className="flex h-[150px] w-[499px] shrink-0 rounded-t-[24px] bg-gradient-to-r from-[#fff7f5] from-58% to-[#fdf0ed] to-58% pl-[33px] pt-[29px]">
      <span className="h-[30px] w-[30px] rounded-full bg-[#d05a50]" />
      <span className="ml-[36px] text-[36px] leading-[44px] font-bold text-[#333]">{children}</span>
    </div>
  );
}

function PostCards() {
  return (
    <section className="flex h-[46px] gap-[18px] overflow-hidden pl-[36px] pt-[12px]">
      <PostCard>大盘</PostCard>
      <PostCard>个股</PostCard>
    </section>
  );
}

function Action({ label, w, children }: { label: string; w: number; children: ReactNode }) {
  return (
    <div className="flex w-[201.500px] flex-col items-center pt-[7px]">
      <Draw box="0 0 64 64" className="h-[64px] w-[64px]">{children}</Draw>
      <Fit w={w} className="mt-[19px] text-[35px] text-[#666]">{label}</Fit>
    </div>
  );
}

function BottomBar() {
  const s = { stroke: "#666", strokeWidth: 2.8, strokeLinejoin: "round" as const };
  return (
    <footer className="flex h-[137px] border-t-[2px] border-[#d4d4d4] bg-[#f7f8fa]">
      <div className="flex w-[275px] flex-col pt-[8px] text-[#d93030]">
        <Draw box="0 0 20 8" className="ml-[128px] h-[8px] w-[20px]">
          <path d="M10 0 20 8H0Z" fill="#777" />
        </Draw>
        <Fit w={141} className="ml-[68px] mt-[14px] text-[41px]">4122.54</Fit>
        <div className="mt-[10px] flex items-center">
          <Fit w={69} className="ml-[43px] text-[35px] text-[#666]">上证</Fit>
          <Fit w={101} className="ml-[52px] text-[39px]">0.14%</Fit>
        </div>
      </div>
      <Action label="交易" w={67}>
        <path d="M16 9.500A27 27 0 0 1 55 46M55 46l7-8M55 46V38M50 54A27 27 0 0 1 9 18M9 18 1 23M9 18V26" {...s} />
        <path d="M22 17 32 30 42 17M32 30V49M22 30.500H42M22 39.500H42" {...s} />
      </Action>
      <Action label="发帖" w={67}>
        <path d="M42 6H12Q6 6 6 12V53Q6 59 12 59H51Q57 59 57 53V24" {...s} />
        <path d="M25 41 27 33 49 11 54 16 32 38ZM51 8 54 5 60 11 57 14Z" fill="#666" />
      </Action>
      <Action label="功能" w={68}>
        <rect x="7" y="7" width="22" height="24" rx="4" {...s} />
        <rect x="7" y="36" width="22" height="23" rx="4" {...s} />
        <rect x="35" y="36" width="22" height="23" rx="4" {...s} />
        <path d="M45.500 6 58 18.500 45.500 31 33.500 18.500Z" {...s} />
      </Action>
      <Action label="设自选" w={104}>
        <circle cx="32" cy="32" r="27" {...s} />
        <circle cx="20.500" cy="32" r="2.800" fill="#666" />
        <circle cx="32" cy="32" r="2.800" fill="#666" />
        <circle cx="43.500" cy="32" r="2.800" fill="#666" />
      </Action>
    </footer>
  );
}

function SystemNav() {
  const s = { stroke: "#888", strokeWidth: 5.5, strokeLinecap: "round" as const, strokeLinejoin: "round" as const };
  return (
    <div className="flex h-[126px] justify-center gap-[178px] pt-[35px]">
      <Draw box="0 0 60 50" className="h-[50px] w-[60px]">
        <path d="M10 13H50M10 28H50M10 43H50" {...s} />
      </Draw>
      <Draw box="0 0 64 50" className="h-[50px] w-[64px]">
        <path d="M6 25 32 6 58 25M14 29V38Q14 43 19 43H46Q51 43 51 38V29" {...s} />
      </Draw>
      <Draw box="0 0 60 50" className="h-[50px] w-[60px]">
        <path d="M17 7 9.500 13H47Q51 13 51 17V39Q51 43 47 43H18" {...s} />
      </Draw>
    </div>
  );
}

export default function App() {
  return (
    <main className={`flex h-[2376px] w-[1080px] flex-col overflow-hidden bg-white ${FONT}`}>
      <StatusBar />
      <Header />
      <Quote />
      <PeriodTabs />
      <IndicatorRow />
      <Charts />
      <AskAi />
      <Notice />
      <InfoTabs />
      <PostCards />
      <BottomBar />
      <SystemNav />
    </main>
  );
}
